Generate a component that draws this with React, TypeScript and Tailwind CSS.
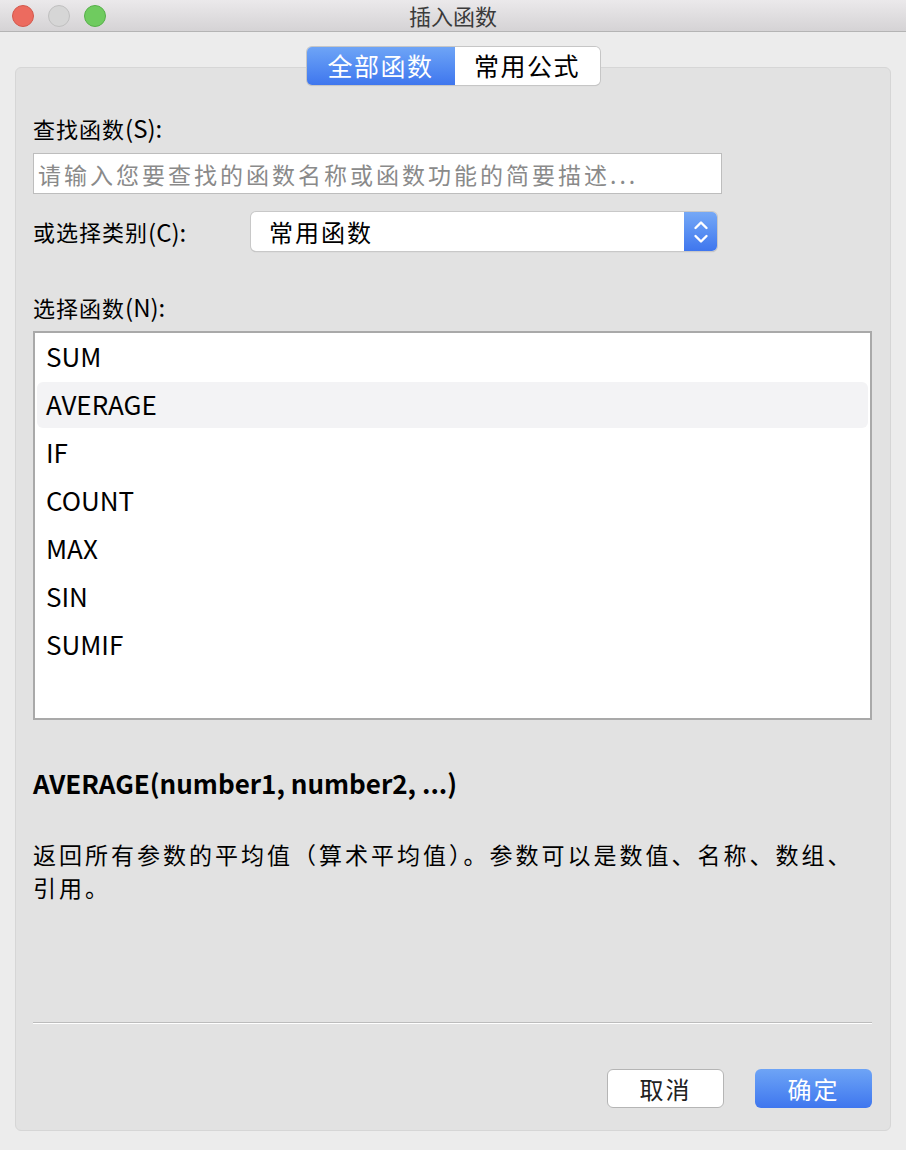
import React, { useState } from 'react';

const FONT = { fontFamily: '"Noto Sans CJK SC", "Noto Sans", sans-serif' };

const functions = ['SUM', 'AVERAGE', 'IF', 'COUNT', 'MAX', 'SIN', 'SUMIF'];

function TrafficLights() {
    return (
        <div className="flex items-center gap-[14px] pl-[12px]">
            <span className="w-[22px] h-[22px] rounded-full bg-[#ec6b5f] border border-[#d3594d]" />
            <span className="w-[22px] h-[22px] rounded-full bg-[#d6d6d6] border border-[#c0c0c0]" />
            <span className="w-[22px] h-[22px] rounded-full bg-[#6fcb5f] border border-[#56b049]" />
        </div>
    );
}

// CJK part spaced a little, latin hotkey part plain and slightly larger
function Label({ cjk, hint, className }: { cjk: string; hint: string; className?: string }) {
    return (
        <div className={'h-[30px] flex items-center ' + (className || '')}>
            <span className="text-[22px] tracking-[1px]">{cjk}</span>
            <span className="text-[24px]">{hint}</span>
        </div>
    );
}

export default function App() {
    const [selected, setSelected] = useState('AVERAGE');
    const [tab, setTab] = useState(0);

    return (
        <div className="w-[906px] h-[1150px] bg-[#ececec] flex flex-col text-black" style={FONT}>
            {/* title bar */}
            <div className="relative h-[32px] flex items-center bg-gradient-to-b from-[#ebe9eb] to-[#d5d3d5] border-b border-[#b4b4b4]">
                <TrafficLights />
                <div className="absolute inset-0 flex items-center justify-center text-[22px] text-[#3a3a3a]">插入函数</div>
            </div>

            <div className="flex flex-col px-[15px] pt-[15px] pb-[19px] flex-1">
                {/* segmented tabs */}
                <div className="relative z-10 flex justify-center">
                    <div className="flex h-[38px] rounded-[5px] shadow-[0_0_0_1px_#c6c6c6,0_1px_1px_rgba(0,0,0,0.15)] overflow-hidden">
                        <button
                            onClick={() => setTab(0)}
                            className={tab === 0
                                ? 'w-[148px] text-[25px] tracking-[1.5px] text-white bg-gradient-to-b from-[#6ea4f6] to-[#3f76ee]'
                                : 'w-[148px] text-[25px] tracking-[1.5px] text-black bg-white'}
                        >
                            全部函数
                        </button>
                        <button
                            onClick={() => setTab(1)}
                            className={tab === 1
                                ? 'w-[145px] text-[25px] tracking-[1.5px] text-white bg-gradient-to-b from-[#6ea4f6] to-[#3f76ee]'
                                : 'w-[145px] text-[25px] tracking-[1.5px] text-black bg-white'}
                        >
                            常用公式
                        </button>
                    </div>
                </div>

                {/* group box */}
                <div className="-mt-[18px] flex-1 flex flex-col bg-[#e2e2e2] border border-[#d6d6d6] rounded-[6px] pl-[17px] pr-[18px] pt-[45px] pb-[22px]">
                    <Label cjk="查找函数" hint="(S):" />
                    <input
                        className="mt-[10px] w-[689px] h-[41px] bg-white border border-[#bdbdbd] px-[4px] text-[23px] tracking-[3px] outline-none placeholder:text-[#8a8a8a]"
                        placeholder="请输入您要查找的函数名称或函数功能的简要描述..."
                        style={FONT}
                    />

                    <div className="mt-[18px] h-[39px] flex items-center">
                        <Label cjk="或选择类别" hint="(C):" className="w-[218px]" />
                        <div className="w-[466px] h-[39px] flex rounded-[5px] bg-white shadow-[0_0_0_1px_#c8c8c8,0_1px_1px_rgba(0,0,0,0.25)] overflow-hidden">
                            <div className="flex-1 flex items-center pl-[18px] text-[24px] tracking-[2px]">常用函数</div>
                            <div className="w-[33px] flex items-center justify-center bg-gradient-to-b from-[#75a8f6] to-[#3f76ee]">
                                <svg width="16" height="28" viewBox="0 0 16 28" fill="none" stroke="white" strokeWidth="2.4" strokeLinecap="round" strokeLinejoin="round">
                                    <path d="M2.5 10 L8 4.5 L13.5 10" />
                                    <path d="M2.5 18 L8 23.5 L13.5 18" />
                                </svg>
                            </div>
                        </div>
                    </div>

                    <Label cjk="选择函数" hint="(N):" className="mt-[41px]" />
                    <div className="mt-[9px] h-[389px] bg-white border-2 border-[#a9a9a9] px-[2px] pt-[1px] flex flex-col gap-[2px]">
                        {functions.map(fn => (
                            <div
                                key={fn}
                                onClick={() => setSelected(fn)}
                                className={fn === selected
                                    ? 'h-[46px] flex items-center pl-[9px] pb-[3px] text-[26px] rounded-[6px] bg-[#f3f3f5]'
                                    : 'h-[46px] flex items-center pl-[9px] pb-[3px] text-[26px] rounded-[6px]'}
                            >
                                {fn}
                            </div>
                        ))}
                    </div>

                    <div className="mt-[47px] h-[30px] flex items-center text-[26px] font-bold">AVERAGE(number1, number2, ...)</div>
                    <div className="mt-[41px] text-[23px] tracking-[3px] leading-[33px]">
                        返回所有参数的平均值（算术平均值）。参数可以是数值、名称、数组、
                        <br />
                        引用。
                    </div>

                    <div className="mt-auto flex flex-col">
                        <div className="h-[1px] bg-[#bcbcbc]" />
                        <div className="h-[1px] bg-white" />
                    </div>

                    <div className="mt-[45px] flex justify-end gap-[31px]">
                        <button className="w-[117px] h-[39px] rounded-[6px] bg-white border border-[#b5b5b5] text-[24px] tracking-[2px] text-[#222]">取消</button>
                        <button className="w-[117px] h-[39px] rounded-[6px] bg-gradient-to-b from-[#6ea4f6] to-[#3f76ee] text-[24px] tracking-[2px] text-white">确定</button>
                    </div>
                </div>
            </div>
        </div>
    );
}
